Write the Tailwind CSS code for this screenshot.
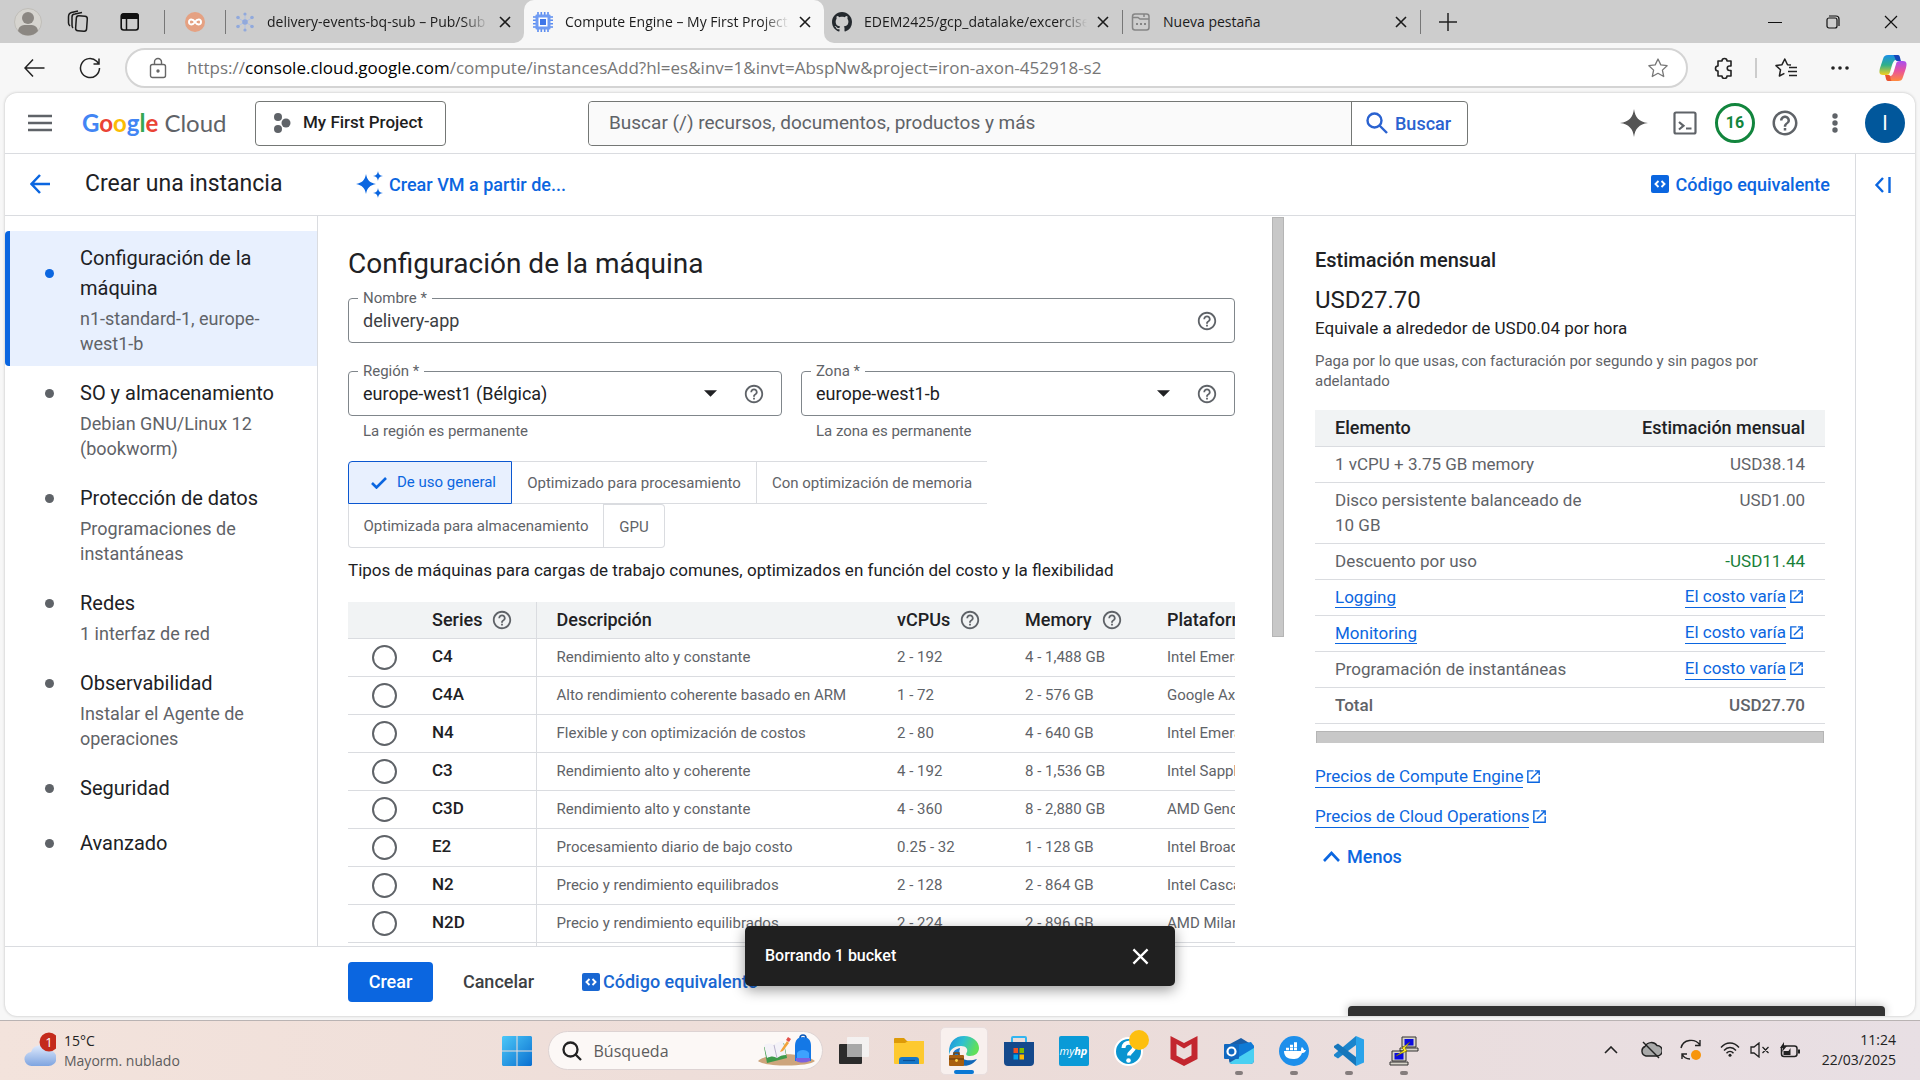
<!DOCTYPE html>
<html lang="es">
<head>
<meta charset="utf-8">
<title>Compute Engine – My First Project</title>
<script src="https://cdn.jsdelivr.net/npm/@tailwindcss/browser@4"></script>
</head>
<body class="flex h-screen flex-col overflow-hidden bg-[#f7f7f7] font-['Roboto',sans-serif] text-[#202124]">

<svg class="hidden" aria-hidden="true">
  <symbol id="help" viewBox="0 0 24 24"><path fill="currentColor" d="M11 18h2v-2h-2v2zm1-16C6.48 2 2 6.48 2 12s4.48 10 10 10 10-4.48 10-10S17.52 2 12 2zm0 18c-4.41 0-8-3.59-8-8s3.59-8 8-8 8 3.59 8 8-3.59 8-8 8zm0-14c-2.21 0-4 1.79-4 4h2c0-1.1.9-2 2-2s2 .9 2 2c0 2-3 1.75-3 5h2c0-2.25 3-2.5 3-5 0-2.21-1.79-4-4-4z"/></symbol>
  <symbol id="ext" viewBox="0 0 24 24"><path fill="currentColor" d="M19 19H5V5h7V3H3v18h18v-9h-2v7zM14 3v2h3.59l-9.83 9.83 1.41 1.41L19 6.41V10h2V3h-7z"/></symbol>
  <symbol id="close" viewBox="0 0 12 12"><path d="M1 1l10 10M11 1L1 11" fill="none" stroke="currentColor" stroke-width="1.6"/></symbol>
  <symbol id="code" viewBox="0 0 18 18"><rect width="18" height="18" rx="2" fill="currentColor"/><path d="M7.5 6L4.5 9l3 3M10.500 6l3 3-3 3" fill="none" stroke="#fff" stroke-width="1.9"/></symbol>
  <symbol id="caret" viewBox="0 0 12 6"><path d="M0 0h12L6 6z" fill="currentColor"/></symbol>
</svg>

<!-- Browser tabs -->
<header class="flex h-[43px] shrink-0 font-['Open_Sans',sans-serif] text-[14px] text-[#1b1b1b]">
  <div class="flex items-center rounded-br-[10px] bg-[#cdcdcd] pl-[14px]">
    <button aria-label="Perfil" class="mr-6"><svg width="28" height="28" viewBox="0 0 28 28"><circle cx="14" cy="14" r="13.500" fill="#d6d4cf" stroke="#bfbdb8"/><circle cx="14" cy="10" r="6" fill="#8b8782"/><path d="M4 23c1-6 5-6 10-6s9 0 10 6c-5 6-15 6-20 0z" fill="#8b8782"/></svg></button>
    <button aria-label="Espacios de trabajo" class="mr-[30px]"><svg width="24" height="24" viewBox="0 0 24 24" fill="none" stroke="#1b1b1b" stroke-width="1.500"><rect x="10" y="6" width="11" height="15" rx="2.500" transform="rotate(4 15 13)"/><path d="M7 18c-1-1-1-2-1-3V7c0-2 1-3 3-3l7-1.500M4 16c-1-1-1.500-2-1.500-3V7c0-3 1-4 3-4.500L12 1"/></svg></button>
    <button aria-label="Pestañas" class="mr-[24px]"><svg width="20" height="20" viewBox="0 0 20 20"><rect x="1.200" y="2" width="17" height="16" rx="2.500" fill="none" stroke="#111" stroke-width="1.600"/><path d="M1 7V4a3 3 0 013-3h12a3 3 0 013 3v3z" fill="#111"/><path d="M6.500 6v12" stroke="#111" stroke-width="1.500"/></svg></button>
    <span class="h-6 w-px bg-[#777]"></span>
    <svg class="mx-5" width="20" height="20" viewBox="0 0 20 20"><circle cx="10" cy="10" r="10" fill="#e5a182"/><path d="M10 10c-2-3-6-3.500-6 0s4 3 6 0 6-3.500 6 0-4 3-6 0z" fill="none" stroke="#fff" stroke-width="2"/></svg>
    <span class="h-6 w-px bg-[#777]"></span>
    <div class="flex w-[298px] items-center pl-[9px]">
      <svg width="20" height="20" viewBox="0 0 20 20" fill="#91a9dc"><path d="M10 10V2M10 10v8M10 10l7-4M10 10L3 6M10 10l7 4M10 10l-7 4" stroke="#afc0e6"/><circle cx="10" cy="10" r="2.800"/><circle cx="10" cy="2" r="1.600"/><circle cx="10" cy="18" r="1.600"/><circle cx="17" cy="5.500" r="1.800"/><circle cx="3" cy="5.500" r="1.800"/><circle cx="17" cy="14.500" r="1.800"/><circle cx="3" cy="14.500" r="1.800"/></svg>
      <span class="ml-3 flex-1 overflow-hidden whitespace-nowrap [mask-image:linear-gradient(to_right,#000_88%,transparent)]">delivery-events-bq-sub – Pub/Sub</span>
      <button aria-label="Cerrar" class="mr-[13px] ml-[10px]"><svg width="12" height="12"><use href="#close"/></svg></button>
    </div>
  </div>
  <div class="bg-[#cdcdcd]">
    <div class="flex h-full w-[300px] items-center rounded-t-[10px] bg-[#f7f7f7] pl-[9px]">
      <svg width="20" height="20" viewBox="0 0 20 20"><path d="M5 0v20M8.300 0v20M11.700 0v20M15 0v20M0 5h20M0 8.300h20M0 11.700h20M0 15h20" stroke="#5b8cf0" stroke-width="1.600"/><rect x="2.500" y="2.500" width="15" height="15" rx="1" fill="#6f9bf3"/><rect x="5.500" y="5.500" width="9" height="9" fill="#fff"/><rect x="7" y="7" width="6" height="6" fill="#3f76e8"/></svg>
      <span class="ml-3 flex-1 overflow-hidden whitespace-nowrap [mask-image:linear-gradient(to_right,#000_88%,transparent)]">Compute Engine – My First Project</span>
      <button aria-label="Cerrar" class="mr-[13px] ml-[10px]"><svg width="12" height="12"><use href="#close"/></svg></button>
    </div>
  </div>
  <div class="flex flex-1 items-center rounded-bl-[10px] bg-[#cdcdcd]">
    <div class="flex w-[298px] items-center pl-[8px]">
      <svg width="20" height="20" viewBox="0 0 16 16"><path fill="#24292e" d="M8 0C3.580 0 0 3.580 0 8c0 3.540 2.290 6.530 5.470 7.590.4.070.55-.17.55-.38 0-.19-.01-.82-.01-1.490-2.010.37-2.530-.49-2.690-.94-.09-.23-.48-.94-.82-1.130-.28-.15-.68-.52-.01-.53.63-.01 1.080.58 1.230.82.72 1.210 1.870.87 2.330.66.070-.52.28-.87.51-1.070-1.780-.2-3.640-.89-3.640-3.950 0-.87.31-1.590.82-2.150-.08-.2-.36-1.020.08-2.120 0 0 .67-.21 2.200.82.64-.18 1.320-.27 2-.27.68 0 1.360.09 2 .27 1.530-1.040 2.200-.82 2.200-.82.44 1.100.16 1.920.08 2.120.51.56.82 1.270.82 2.150 0 3.070-1.870 3.750-3.650 3.950.29.25.54.73.54 1.480 0 1.070-.01 1.930-.01 2.200 0 .21.15.46.55.38A8.010 8.010 0 0016 8c0-4.420-3.580-8-8-8z"/></svg>
      <span class="ml-3 flex-1 overflow-hidden whitespace-nowrap [mask-image:linear-gradient(to_right,#000_88%,transparent)]">EDEM2425/gcp_datalake/excercises</span>
      <button aria-label="Cerrar" class="mr-[13px] ml-[10px]"><svg width="12" height="12"><use href="#close"/></svg></button>
    </div>
    <span class="h-6 w-px bg-[#777]"></span>
    <div class="flex w-[297px] items-center pl-[8px]">
      <svg width="20" height="20" viewBox="0 0 20 20" fill="none" stroke="#858585" stroke-width="1.500"><rect x="1.500" y="2" width="16.500" height="16" rx="2.500"/><path d="M2 5.500h5l2 1.500h9M13 2v3"/><path d="M5 12h2M9 12h2M13 12h2" stroke-width="2"/></svg>
      <span class="ml-3 flex-1">Nueva pestaña</span>
      <button aria-label="Cerrar" class="mr-[13px]"><svg width="12" height="12"><use href="#close"/></svg></button>
    </div>
    <span class="h-6 w-px bg-[#777]"></span>
    <button aria-label="Nueva pestaña" class="ml-[18px]"><svg width="18" height="18" viewBox="0 0 18 18"><path d="M9 0v18M0 9h18" stroke="#222" stroke-width="1.500"/></svg></button>
    <div class="ml-auto flex items-center gap-11 pr-[22px]">
      <button aria-label="Minimizar"><svg width="14" height="14"><path d="M0 7.500h14" stroke="#111"/></svg></button>
      <button aria-label="Restaurar"><svg width="14" height="14" fill="none" stroke="#111" stroke-width="1.200"><rect x="1" y="3" width="10" height="10" rx="2"/><path d="M3 1h7a3 3 0 013 3v7"/></svg></button>
      <button aria-label="Cerrar ventana"><svg width="14" height="14"><path d="M1 1l12 12M13 1L1 13" stroke="#111" stroke-width="1.200"/></svg></button>
    </div>
  </div>
</header>

<!-- Address bar -->
<div class="flex h-[50px] shrink-0 items-center pr-[13px] pl-[24px] text-[#222]">
  <button aria-label="Atrás" class="mr-[34px]"><svg width="21" height="20" viewBox="0 0 21 20" fill="none" stroke="currentColor" stroke-width="1.500"><path d="M9 1.500L1 10l8 8.500M1 10h19.500"/></svg></button>
  <button aria-label="Actualizar" class="mr-[24px]"><svg width="22" height="22" viewBox="0 0 22 22" fill="none" stroke="currentColor" stroke-width="1.500"><path d="M20.500 11a9.500 9.500 0 11-2.800-6.700L20 7M20 1.500V7h-5.500"/></svg></button>
  <div class="flex h-10 flex-1 items-center rounded-full border-2 border-[#d4d4d4] bg-white pr-[18px] pl-[22px]">
    <svg width="18" height="22" viewBox="0 0 18 22" fill="none" stroke="#666" stroke-width="1.400"><rect x="1.500" y="7.500" width="15" height="13" rx="2"/><path d="M5.500 7.500V5a3.500 3.500 0 017 0v2.500"/><circle cx="9" cy="14" r="1" fill="#444"/></svg>
    <p class="ml-5 flex-1 font-['Open_Sans',sans-serif] text-[17px] whitespace-nowrap text-[#767676]">https://<span class="text-black">console.cloud.google.com</span>/compute/instancesAdd?hl=es&amp;inv=1&amp;invt=AbspNw&amp;project=iron-axon-452918-s2</p>
    <button aria-label="Favorito"><svg width="20" height="20" viewBox="0 0 20 20" fill="none" stroke="#777" stroke-width="1.300" stroke-linejoin="round"><path d="M10 1l2.800 5.900 6.300.8-4.700 4.400 1.300 6.400-5.700-3.200-5.700 3.200 1.300-6.400L.9 7.700l6.300-.8z"/></svg></button>
  </div>
  <button aria-label="Extensiones" class="mr-[20px] ml-[25px]"><svg width="22" height="22" viewBox="0 0 22 22" fill="none" stroke="currentColor" stroke-width="1.600" stroke-linejoin="round"><path d="M5 4h4a2.500 2.500 0 015 0h4v5h-1.500a2.200 2.200 0 000 4.500H18V19h-4a2.500 2.500 0 01-5 0H5v-5a2.500 2.500 0 010-5z"/></svg></button>
  <span class="h-5 w-[2px] bg-[#ccc]"></span>
  <button aria-label="Favoritos" class="mr-[34px] ml-[18px]"><svg width="22" height="20" viewBox="0 0 22 20" fill="none" stroke="currentColor" stroke-width="1.500" stroke-linejoin="round"><path d="M16 7l-3.500-.3L9.800 1 7 6.700 1 7.600l4.500 4.200L4.400 18l5-2.600M14 9.500h8M13 13.500h9M14 17.500h8"/></svg></button>
  <button aria-label="Más" class="mr-[30px]"><svg width="18" height="4" fill="#222"><circle cx="2" cy="2" r="1.800"/><circle cx="9" cy="2" r="1.800"/><circle cx="16" cy="2" r="1.800"/></svg></button>
  <button aria-label="Copilot"><svg width="28" height="28" viewBox="0 0 28 28"><defs><linearGradient id="cpa" x1="0" y1="0" x2="0" y2="1"><stop offset="0" stop-color="#1a8fe8"/><stop offset=".5" stop-color="#2fb08a"/><stop offset="1" stop-color="#f5cf1c"/></linearGradient><linearGradient id="cpb" x1="0" y1="0" x2="0" y2="1"><stop offset="0" stop-color="#a84ff0"/><stop offset=".5" stop-color="#e9549c"/><stop offset="1" stop-color="#ff8a3c"/></linearGradient></defs><path d="M9 1h9c2 0 2 2 3 5h-4c-2 0-3 2-4 5l-2 7c-1 3-2 3-5 3H4c-4 0-4-3-3-7L4 5c1-3 2-4 5-4z" fill="url(#cpa)"/><path d="M14 1h5c2 0 2 3 3 6h-4c-2 0-2-6-4-6z" fill="#1546b8"/><path d="M19 27h-9c-2 0-2-2-3-5h4c2 0 3-2 4-5l2-7c1-3 2-3 5-3h2c4 0 4 3 3 7l-3 9c-1 3-2 4-5 4z" fill="url(#cpb)"/><path d="M13 27H9c-2 0-2-3-3-6h4c2 0 1 6 3 6z" fill="#e8522e"/><path d="M12 18l3-9h2l-3 9z" fill="#fff"/></svg></button>
</div>

<!-- Console page -->
<div class="relative mx-[5px] mb-1 flex min-h-0 flex-1 flex-col overflow-hidden rounded-[12px] bg-white shadow-[0_0_3px_#bbb]">
  <div class="flex h-[61px] shrink-0 items-center border-b border-[#dadce0] pr-[10px] pl-[23px]">
    <button aria-label="Menú"><svg width="24" height="20" viewBox="0 0 24 20"><path d="M0 3h24M0 10h24M0 17h24" stroke="#5f6368" stroke-width="2.600"/></svg></button>
    <a href="#" class="ml-[30px] w-[145px] font-['Lato',sans-serif] text-[24px] whitespace-nowrap"><span class="font-bold"><span class="text-[#4285f4]">G</span><span class="text-[#ea4335]">o</span><span class="text-[#fbbc04]">o</span><span class="text-[#4285f4]">g</span><span class="text-[#34a853]">l</span><span class="text-[#ea4335]">e</span></span> <span class="text-[#5f6368]">Cloud</span></a>
    <button class="ml-7 flex h-[45px] w-[191px] items-center rounded-[4px] border border-[#747775] pl-[17px] text-[17px] font-medium text-[#1f1f1f]"><svg class="mr-[12px]" width="18" height="20" viewBox="0 0 18 20" fill="#5f6368"><circle cx="5" cy="4" r="4"/><circle cx="13" cy="10" r="4.500"/><circle cx="5" cy="16" r="4"/></svg>My First Project</button>
    <form class="ml-[142px] flex h-[45px] w-[880px] rounded-[4px] border border-[#747775]">
      <input aria-label="Buscar recursos" placeholder="Buscar (/) recursos, documentos, productos y más" class="flex-1 rounded-l-[4px] bg-[#fafafa] px-5 text-[19px] placeholder:text-[#5f6368]">
      <button type="button" class="flex w-[116px] items-center border-l border-[#747775] pl-[14px] text-[18px] font-medium text-[#2a62d0]"><svg class="mr-[7px]" width="22" height="22" viewBox="0 0 22 22" fill="none" stroke="currentColor" stroke-width="2.400"><circle cx="8.500" cy="8.500" r="7"/><path d="M13.500 13.500l7.500 7.500"/></svg>Buscar</button>
    </form>
    <div class="ml-auto flex items-center">
      <button aria-label="Gemini"><svg width="28" height="28" viewBox="0 0 28 28"><path d="M14 0c1 8 5 13 14 14-9 1-13 6-14 14-1-8-5-13-14-14C9 13 13 8 14 0z" fill="#555"/></svg></button>
      <button aria-label="Cloud Shell" class="mr-[18px] ml-[25px]"><svg width="24" height="24" viewBox="0 0 24 24" fill="none" stroke="#5f6368" stroke-width="2.200"><rect x="1.500" y="1.500" width="21" height="21" rx="1.500"/><path d="M6 11l4.500 3.800L6 18.500M13 17.500h5.500"/></svg></button>
      <button class="size-10 rounded-full border-[3px] border-[#12853d] text-[16px] font-bold text-[#12853d]">16</button>
      <button aria-label="Ayuda" class="ml-[15px] text-[#5f6368]"><svg width="30" height="30"><use href="#help"/></svg></button>
      <button aria-label="Más opciones" class="mr-[27px] ml-[32px]"><svg width="6" height="20" fill="#5f6368"><circle cx="3" cy="3" r="2.700"/><circle cx="3" cy="10" r="2.700"/><circle cx="3" cy="17" r="2.700"/></svg></button>
      <button class="size-10 rounded-full bg-[#01579b] text-[20px] text-white">I</button>
    </div>
  </div>

  <div class="flex min-h-0 flex-1">
    <div class="flex min-w-0 flex-1 flex-col">
      <div class="flex h-[62px] shrink-0 items-center border-b border-[#dadce0] pr-[25px] pb-px pl-[25px] text-[18px] font-medium text-[#0b66e0]">
        <button aria-label="Volver"><svg width="20" height="20" viewBox="0 0 20 20" fill="none" stroke="currentColor" stroke-width="2.500"><path d="M10 1L1.500 10 10 19M1.500 10H20"/></svg></button>
        <h1 class="ml-[35px] w-[271px] text-[23px] font-normal text-[#202124]">Crear una instancia</h1>
        <button class="flex items-center"><svg class="mr-[6px]" width="27" height="27" viewBox="0 0 27 27" fill="currentColor"><path d="M10 3c1 6 4 9 10 10-6 1-9 4-10 10-1-6-4-9-10-10C6 12 9 9 10 3zM22 0c.5 3 1.500 4.500 5 5-3.500.5-4.500 2-5 5-.5-3-1.500-4.500-5-5 3.500-.5 4.500-2 5-5zM22 17c.5 3 1.500 4.500 5 5-3.500.5-4.500 2-5 5-.5-3-1.500-4.500-5-5 3.500-.5 4.500-2 5-5z"/></svg>Crear VM a partir de...</button>
        <button class="ml-auto flex items-center"><svg class="mr-[7px]" width="18" height="18"><use href="#code"/></svg>Código equivalente</button>
      </div>

      <div class="flex min-h-0 flex-1">
        <!-- Section navigation -->
        <nav class="w-[313px] shrink-0 border-r border-[#dadce0] pt-[15px] text-[20px] leading-[30px]">
          <a href="#" class="flex min-h-[55px] rounded-l-[4px] border-l-[5px] border-[#0b66e0] bg-[#e8f0fe] pt-3 pr-[40px] pb-[10px] pl-[35px]">
            <span class="mt-[26px] size-[9px] shrink-0 rounded-full bg-[#0b66e0]"></span>
            <span class="ml-[26px]">Configuración de la máquina<small class="mt-[3px] block text-[18px] leading-[25px] text-[#5f6368]">n1-standard-1, europe-west1-b</small></span>
          </a>
          <a href="#" class="flex min-h-[55px] pt-3 pr-[40px] pb-[10px] pl-10">
            <span class="mt-[11px] size-[9px] shrink-0 rounded-full bg-[#5f6368]"></span>
            <span class="ml-[26px]">SO y almacenamiento<small class="mt-[3px] block text-[18px] leading-[25px] text-[#5f6368]">Debian GNU/Linux 12 (bookworm)</small></span>
          </a>
          <a href="#" class="flex min-h-[55px] pt-3 pr-[40px] pb-[10px] pl-10">
            <span class="mt-[11px] size-[9px] shrink-0 rounded-full bg-[#5f6368]"></span>
            <span class="ml-[26px]">Protección de datos<small class="mt-[3px] block text-[18px] leading-[25px] text-[#5f6368]">Programaciones de instantáneas</small></span>
          </a>
          <a href="#" class="flex min-h-[55px] pt-3 pr-[40px] pb-[10px] pl-10">
            <span class="mt-[11px] size-[9px] shrink-0 rounded-full bg-[#5f6368]"></span>
            <span class="ml-[26px]">Redes<small class="mt-[3px] block text-[18px] leading-[25px] text-[#5f6368]">1 interfaz de red</small></span>
          </a>
          <a href="#" class="flex min-h-[55px] pt-3 pr-[40px] pb-[10px] pl-10">
            <span class="mt-[11px] size-[9px] shrink-0 rounded-full bg-[#5f6368]"></span>
            <span class="ml-[26px]">Observabilidad<small class="mt-[3px] block text-[18px] leading-[25px] text-[#5f6368]">Instalar el Agente de operaciones</small></span>
          </a>
          <a href="#" class="flex min-h-[55px] pt-3 pl-10">
            <span class="mt-[11px] size-[9px] shrink-0 rounded-full bg-[#5f6368]"></span>
            <span class="ml-[26px]">Seguridad</span>
          </a>
          <a href="#" class="flex min-h-[55px] pt-3 pl-10">
            <span class="mt-[11px] size-[9px] shrink-0 rounded-full bg-[#5f6368]"></span>
            <span class="ml-[26px]">Avanzado</span>
          </a>
        </nav>

        <!-- Machine configuration -->
        <main class="flex min-w-0 flex-1 overflow-hidden">
          <div class="min-w-0 flex-1 overflow-hidden pt-[30px] pr-[37px] pl-[30px]">
            <h2 class="text-[28px] leading-9">Configuración de la máquina</h2>
            <div class="relative mt-4 flex h-[45px] items-center rounded-[4px] border border-[#80868b] pr-[16px]">
              <label for="name" class="absolute -top-[11px] left-[9px] bg-white px-[5px] text-[15px] leading-5 text-[#5f6368]">Nombre *</label>
              <input id="name" value="delivery-app" class="h-full flex-1 px-[14px] text-[18px] text-[#3c4043]">
              <svg class="text-[#5f6368]" width="22" height="22"><use href="#help"/></svg>
            </div>
            <div class="mt-7 grid grid-cols-2 gap-[19px]">
              <div>
                <div class="relative flex h-[45px] items-center rounded-[4px] border border-[#80868b] pr-[16px]">
                  <label for="region" class="absolute -top-[11px] left-[9px] bg-white px-[5px] text-[15px] leading-5 text-[#5f6368]">Región *</label>
                  <select id="region" class="h-full flex-1 appearance-none px-[14px] text-[18px]"><option>europe-west1 (Bélgica)</option></select>
                  <svg width="13" height="7"><use href="#caret"/></svg>
                  <svg class="ml-[26px] text-[#5f6368]" width="22" height="22"><use href="#help"/></svg>
                </div>
                <p class="mt-[5px] pl-[15px] text-[15px] leading-5 text-[#5f6368]">La región es permanente</p>
              </div>
              <div>
                <div class="relative flex h-[45px] items-center rounded-[4px] border border-[#80868b] pr-[16px]">
                  <label for="zone" class="absolute -top-[11px] left-[9px] bg-white px-[5px] text-[15px] leading-5 text-[#5f6368]">Zona *</label>
                  <select id="zone" class="h-full flex-1 appearance-none px-[14px] text-[18px]"><option>europe-west1-b</option></select>
                  <svg width="13" height="7"><use href="#caret"/></svg>
                  <svg class="ml-[26px] text-[#5f6368]" width="22" height="22"><use href="#help"/></svg>
                </div>
                <p class="mt-[5px] pl-[15px] text-[15px] leading-5 text-[#5f6368]">La zona es permanente</p>
              </div>
            </div>
            <div class="mt-[20px] text-[15px] text-[#5f6368]">
              <div class="flex h-[43px]">
                <button class="flex w-[164px] items-center rounded-tl-[4px] border border-[#0b57d0] bg-[#e8f0fe] pl-[22px] text-[#0b66e0]"><svg class="mr-[10px]" width="16" height="12" viewBox="0 0 16 12" fill="none" stroke="currentColor" stroke-width="2.600"><path d="M1 6l4.500 4.500L15 1"/></svg>De uso general</button>
                <button class="w-[245px] border-y border-r border-[#dadce0] pt-[2px]">Optimizado para procesamiento</button>
                <button class="w-[230px] border-y border-[#dadce0] pt-[2px]">Con optimización de memoria</button>
              </div>
              <div class="flex h-[44px]">
                <button class="w-[256px] rounded-bl-[4px] border border-t-0 border-[#dadce0] pt-[2px]">Optimizada para almacenamiento</button>
                <button class="w-[61px] rounded-r-[4px] border-y border-r border-[#dadce0] pt-[2px]">GPU</button>
              </div>
            </div>
            <p class="mt-[10px] text-[17px] leading-6">Tipos de máquinas para cargas de trabajo comunes, optimizados en función del costo y la flexibilidad</p>
            <div class="mt-5 overflow-hidden">
              <table class="w-[1009px] table-fixed text-left text-[15px] text-[#5f6368]">
                <colgroup><col class="w-[64px]"><col class="w-[124px]"><col class="w-[341px]"><col class="w-[128px]"><col class="w-[142px]"><col></colgroup>
                <thead class="bg-[#f1f3f4] text-[18px] text-[#202124]">
                  <tr class="h-9 border-b border-[#dadce0]">
                    <th></th>
                    <th class="border-r border-[#dadce0] pl-5 font-medium"><span class="flex items-center gap-[9px]">Series<svg class="text-[#5f6368]" width="22" height="22"><use href="#help"/></svg></span></th>
                    <th class="pl-5 font-medium">Descripción</th>
                    <th class="pl-5 font-medium"><span class="flex items-center gap-[9px]">vCPUs<svg class="text-[#5f6368]" width="22" height="22"><use href="#help"/></svg></span></th>
                    <th class="pl-5 font-medium"><span class="flex items-center gap-[9px]">Memory<svg class="text-[#5f6368]" width="22" height="22"><use href="#help"/></svg></span></th>
                    <th class="pl-5 font-medium">Plataforma de CPU</th>
                  </tr>
                </thead>
                <tbody>
                  <tr class="h-[38px] border-b border-[#dadce0]"><td class="pl-[24px]"><input id="c4" type="radio" name="series" class="block size-[25px] appearance-none rounded-full border-2 border-[#5f6368]"></td><td class="border-r border-[#dadce0] pl-5"><label for="c4" class="text-[17px] font-medium text-[#202124]">C4</label></td><td class="pl-5">Rendimiento alto y constante</td><td class="pl-5">2 - 192</td><td class="pl-5">4 - 1,488 GB</td><td class="pl-5">Intel Emerald Rapids</td></tr>
                  <tr class="h-[38px] border-b border-[#dadce0]"><td class="pl-[24px]"><input id="c4a" type="radio" name="series" class="block size-[25px] appearance-none rounded-full border-2 border-[#5f6368]"></td><td class="border-r border-[#dadce0] pl-5"><label for="c4a" class="text-[17px] font-medium text-[#202124]">C4A</label></td><td class="pl-5">Alto rendimiento coherente basado en ARM</td><td class="pl-5">1 - 72</td><td class="pl-5">2 - 576 GB</td><td class="pl-5">Google Axion</td></tr>
                  <tr class="h-[38px] border-b border-[#dadce0]"><td class="pl-[24px]"><input id="n4" type="radio" name="series" class="block size-[25px] appearance-none rounded-full border-2 border-[#5f6368]"></td><td class="border-r border-[#dadce0] pl-5"><label for="n4" class="text-[17px] font-medium text-[#202124]">N4</label></td><td class="pl-5">Flexible y con optimización de costos</td><td class="pl-5">2 - 80</td><td class="pl-5">4 - 640 GB</td><td class="pl-5">Intel Emerald Rapids</td></tr>
                  <tr class="h-[38px] border-b border-[#dadce0]"><td class="pl-[24px]"><input id="c3" type="radio" name="series" class="block size-[25px] appearance-none rounded-full border-2 border-[#5f6368]"></td><td class="border-r border-[#dadce0] pl-5"><label for="c3" class="text-[17px] font-medium text-[#202124]">C3</label></td><td class="pl-5">Rendimiento alto y coherente</td><td class="pl-5">4 - 192</td><td class="pl-5">8 - 1,536 GB</td><td class="pl-5">Intel Sapphire Rapids</td></tr>
                  <tr class="h-[38px] border-b border-[#dadce0]"><td class="pl-[24px]"><input id="c3d" type="radio" name="series" class="block size-[25px] appearance-none rounded-full border-2 border-[#5f6368]"></td><td class="border-r border-[#dadce0] pl-5"><label for="c3d" class="text-[17px] font-medium text-[#202124]">C3D</label></td><td class="pl-5">Rendimiento alto y constante</td><td class="pl-5">4 - 360</td><td class="pl-5">8 - 2,880 GB</td><td class="pl-5">AMD Genoa</td></tr>
                  <tr class="h-[38px] border-b border-[#dadce0]"><td class="pl-[24px]"><input id="e2" type="radio" name="series" class="block size-[25px] appearance-none rounded-full border-2 border-[#5f6368]"></td><td class="border-r border-[#dadce0] pl-5"><label for="e2" class="text-[17px] font-medium text-[#202124]">E2</label></td><td class="pl-5">Procesamiento diario de bajo costo</td><td class="pl-5">0.25 - 32</td><td class="pl-5">1 - 128 GB</td><td class="pl-5">Intel Broadwell</td></tr>
                  <tr class="h-[38px] border-b border-[#dadce0]"><td class="pl-[24px]"><input id="n2" type="radio" name="series" class="block size-[25px] appearance-none rounded-full border-2 border-[#5f6368]"></td><td class="border-r border-[#dadce0] pl-5"><label for="n2" class="text-[17px] font-medium text-[#202124]">N2</label></td><td class="pl-5">Precio y rendimiento equilibrados</td><td class="pl-5">2 - 128</td><td class="pl-5">2 - 864 GB</td><td class="pl-5">Intel Cascade Lake</td></tr>
                  <tr class="h-[38px] border-b border-[#dadce0]"><td class="pl-[24px]"><input id="n2d" type="radio" name="series" class="block size-[25px] appearance-none rounded-full border-2 border-[#5f6368]"></td><td class="border-r border-[#dadce0] pl-5"><label for="n2d" class="text-[17px] font-medium text-[#202124]">N2D</label></td><td class="pl-5">Precio y rendimiento equilibrados</td><td class="pl-5">2 - 224</td><td class="pl-5">2 - 896 GB</td><td class="pl-5">AMD Milan</td></tr>
                  <tr class="h-[38px]"><td></td><td class="border-r border-[#dadce0]"></td><td></td><td></td><td></td><td></td></tr>
                </tbody>
              </table>
            </div>
          </div>
          <div class="mt-px h-[420px] w-3 shrink-0 border border-[#b5b5b5] bg-[#c8c8c8]"></div>
        </main>

        <!-- Monthly estimate -->
        <aside class="w-[571px] shrink-0 pt-[30px] pr-[30px] pl-[31px] text-[17px]">
          <h2 class="text-[20px] leading-[28px] font-medium">Estimación mensual</h2>
          <p class="mt-3 text-[24px] leading-[28px]">USD27.70</p>
          <p class="leading-[28px]">Equivale a alrededor de USD0.04 por hora</p>
          <p class="mt-[9px] text-[15px] leading-5 text-[#5f6368]">Paga por lo que usas, con facturación por segundo y sin pagos por adelantado</p>
          <table class="mt-[19px] w-full leading-[25px] text-[#5f6368]">
            <thead class="bg-[#f1f3f4] text-[18px] text-[#202124]"><tr class="h-9 border-b border-[#dadce0]"><th class="w-[300px] pl-5 text-left font-medium">Elemento</th><th class="pr-5 text-right font-medium">Estimación mensual</th></tr></thead>
            <tbody class="align-top">
              <tr class="border-b border-[#dadce0]"><td class="py-[5px] pl-5">1 vCPU + 3.75 GB memory</td><td class="py-[5px] pr-5 text-right">USD38.14</td></tr>
              <tr class="border-b border-[#dadce0]"><td class="py-[5px] pr-5 pl-5">Disco persistente balanceado de 10&nbsp;GB</td><td class="py-[5px] pr-5 text-right">USD1.00</td></tr>
              <tr class="border-b border-[#dadce0]"><td class="py-[5px] pl-5">Descuento por uso</td><td class="py-[5px] pr-5 text-right text-[#188038]">-USD11.44</td></tr>
              <tr class="border-b border-[#dadce0] text-[#0b66e0]"><td class="py-[5px] pl-5"><a href="#" class="border-b border-current">Logging</a></td><td class="py-[5px] pr-5"><a href="#" class="flex items-center justify-end gap-[2px]"><span class="border-b border-current leading-[22px]">El costo varía</span><svg width="17" height="17"><use href="#ext"/></svg></a></td></tr>
              <tr class="border-b border-[#dadce0] text-[#0b66e0]"><td class="py-[5px] pl-5"><a href="#" class="border-b border-current">Monitoring</a></td><td class="py-[5px] pr-5"><a href="#" class="flex items-center justify-end gap-[2px]"><span class="border-b border-current leading-[22px]">El costo varía</span><svg width="17" height="17"><use href="#ext"/></svg></a></td></tr>
              <tr class="border-b border-[#dadce0]"><td class="py-[5px] pl-5">Programación de instantáneas</td><td class="py-[5px] pr-5 text-[#0b66e0]"><a href="#" class="flex items-center justify-end gap-[2px]"><span class="border-b border-current leading-[22px]">El costo varía</span><svg width="17" height="17"><use href="#ext"/></svg></a></td></tr>
              <tr class="border-b border-[#dadce0] font-medium"><td class="py-[5px] pl-5">Total</td><td class="py-[5px] pr-5 text-right">USD27.70</td></tr>
            </tbody>
          </table>
          <div class="mx-px mt-[7px] h-3 border border-b-0 border-[#b5b5b5] bg-[#c8c8c8]"></div>
          <div class="mt-[22px] flex flex-col items-start gap-[17px] text-[#0b66e0]">
            <a href="#" class="flex items-center gap-[2px]"><span class="border-b border-current leading-[22px]">Precios de Compute Engine</span><svg width="17" height="17"><use href="#ext"/></svg></a>
            <a href="#" class="flex items-center gap-[2px]"><span class="border-b border-current leading-[22px]">Precios de Cloud Operations</span><svg width="17" height="17"><use href="#ext"/></svg></a>
            <button class="flex items-center pl-2 text-[18px] leading-[23px] font-medium"><svg class="mr-[7px]" width="17" height="11" viewBox="0 0 17 11" fill="none" stroke="currentColor" stroke-width="2.600"><path d="M1 10l7.500-8L16 10"/></svg>Menos</button>
          </div>
        </aside>
      </div>

      <footer class="flex h-[70px] shrink-0 items-center border-t border-[#dadce0] pl-[343px] text-[18px] font-medium">
        <button class="h-10 w-[85px] rounded-[4px] bg-[#0b66e0] text-white">Crear</button>
        <button class="ml-[29px] w-[73px] text-[#3c4043]">Cancelar</button>
        <button class="ml-[47px] flex items-center text-[#1967d2]"><svg class="mr-[3px]" width="18" height="18"><use href="#code"/></svg>Código equivalente</button>
      </footer>
    </div>
    <div class="w-[60px] shrink-0 border-l border-[#dadce0] pt-[22px] pl-[18px] text-[#0b66e0]">
      <button aria-label="Mostrar panel"><svg width="18" height="16" viewBox="0 0 18 16" fill="none" stroke="currentColor" stroke-width="2.400"><path d="M9 1L2.500 8 9 15M15.500 0v16"/></svg></button>
    </div>
  </div>

  <!-- Notifications over the page -->
  <div role="status" class="absolute bottom-[30px] left-1/2 flex h-[60px] w-[430px] -translate-x-1/2 items-center justify-between rounded-[5px] bg-[#202020] pr-[26px] pl-5 text-[16px] font-medium text-white shadow-[0_4px_14px_rgba(0,0,0,0.4)]">Borrando 1 bucket<button aria-label="Cerrar aviso"><svg width="17" height="17"><use href="#close"/></svg></button></div>
  <div class="absolute right-[30px] bottom-0 h-[10px] w-[537px] rounded-t-[4px] bg-[#323232] shadow-[0_0_10px_rgba(0,0,0,0.3)]"></div>
</div>

<!-- Windows taskbar -->
<div class="grid h-[60px] shrink-0 grid-cols-[1fr_auto_1fr] items-center border-t border-[#b9b3b3] bg-linear-to-r from-[#f3e3dc] via-[#ecdcd8] to-[#e8dfe4] font-['Open_Sans',sans-serif] text-[14px] text-[#222]">
  <div class="flex items-center gap-2 pl-[24px]">
    <svg width="32" height="38" viewBox="0 0 32 38"><defs><linearGradient id="wc" x1="0" y1="0" x2="0" y2="1"><stop offset="0" stop-color="#dfeafc"/><stop offset="1" stop-color="#7ea4e0"/></linearGradient></defs><path d="M8 34a7 7 0 01-1-14 10 10 0 0118-2 8 8 0 01-1 16z" fill="url(#wc)"/><circle cx="25" cy="10" r="9.500" fill="#c42b1c"/><text x="25" y="15" font-size="13" fill="#fff" text-anchor="middle">1</text></svg>
    <div class="leading-5"><p>15°C</p><p class="text-[#5c5c5c]">Mayorm. nublado</p></div>
  </div>

  <div class="flex items-center">
    <button aria-label="Inicio"><svg width="30" height="30" viewBox="0 0 30 30"><defs><linearGradient id="win" x1="0" y1="0" x2="1" y2="1"><stop offset="0" stop-color="#4cc8f8"/><stop offset="1" stop-color="#0a6fd0"/></linearGradient></defs><path d="M1 0h13.500v14.500H0V1zM15.500 0H29l1 1v13.500H15.500zM0 15.500h14.500V30H1l-1-1zM15.500 15.500H30V29l-1 1H15.500z" fill="url(#win)"/></svg></button>
    <label class="ml-4 flex h-[39px] w-[275px] items-center rounded-full border border-[#ddd3d3] bg-[#fcf8f6] pr-[6px] pl-[13px]">
      <svg width="20" height="20" viewBox="0 0 20 20" fill="none" stroke="#222" stroke-width="2.300"><circle cx="8.500" cy="8.500" r="7"/><path d="M13 13l6 6"/></svg>
      <input aria-label="Búsqueda" placeholder="Búsqueda" class="ml-3 w-0 flex-1 text-[16px] placeholder:text-[#5c5c5c]">
      <svg width="58" height="34" viewBox="0 0 58 34"><path d="M0 27c10-9 46-9 57 0-6 6-50 6-57 0z" fill="#cda57c"/><path d="M6 13l20-4 3 15-20 5z" fill="#3d9a4a"/><path d="M6 11c4-2 7-2 10 0 3-3 6-4 9-4l3 14c-4 0-6 1-9 3-3-2-6-2-10 0z" fill="#f4f2f8"/><path d="M16 11l3 13" stroke="#b9b3cc"/><path d="M23 16l6-9 2 2-6 8-3 1z" fill="#f2a33a"/><path d="M28 6l2-3 3 2-2 3z" fill="#e2504a"/><path d="M37 12c0-6 3-9 8-9s8 3 8 9v15H37z" fill="#1478e6"/><path d="M39 19c2-4 10-4 12 0v6H39z" fill="#3da2ff"/><path d="M38 24h14v3c-5 2-10 2-14 0z" fill="#7b61e0"/><path d="M42 4c0-4 6-4 6 0" fill="none" stroke="#0d58b8" stroke-width="1.500"/></svg>
    </label>
    <div class="ml-4 flex items-center gap-[25px]">
      <button aria-label="Vista de tareas"><svg width="30" height="30" viewBox="0 0 30 30"><rect y="8" width="23" height="20" rx="1" fill="#2b2b2b"/><rect x="8" y="1" width="22" height="20" rx="1" fill="#f4f4f4" fill-opacity=".85"/><path d="M8 8h15v13H8z" fill="#a8a8a8"/></svg></button>
      <button aria-label="Explorador"><svg width="30" height="30" viewBox="0 0 30 30"><path d="M0 3q0-1 1-1h9l3 3h16q1 0 1 1v6H0z" fill="#dd9a08"/><path d="M0 7h11l3-2h16v22q0 1-1 1H1q-1 0-1-1z" fill="#fdc92f"/><path d="M5 28v-4q0-3 3-3h14q3 0 3 3v4z" fill="#1577c8"/><path d="M9 24.500h12" stroke="#0b4f94" stroke-width="1.200"/></svg></button>
      <button aria-label="Edge" class="relative -mx-[9px] flex size-12 items-center justify-center rounded-[5px] border border-[#e9dede] bg-[#f8f0ee]"><svg width="30" height="30" viewBox="0 0 30 30"><defs><linearGradient id="eg" x1="0" y1="0" x2="1" y2=".3"><stop offset="0" stop-color="#1b8fe0"/><stop offset=".5" stop-color="#2fc0d0"/><stop offset="1" stop-color="#5fe05a"/></linearGradient></defs><path d="M0 16C0 6 6 0 15 0c9 0 15 6 15 12 0 5-4 8-9 8-3 0-5-1-3-4 1-3-1-6-6-6-6 0-11 3-12 9z" fill="url(#eg)"/><path d="M10 13c-2 8 6 14 18 10-4 6-12 9-20 5z" fill="#1268b8"/><path d="M11 12c-5 1-8 4-7 9l8 2c-2-4-2-7-1-11z" fill="#1a7ad0"/><rect y="19" width="15" height="11" rx="1" fill="#a85f10"/><path d="M0 23h15" stroke="#5f3508" stroke-width="1"/><path d="M5 19v-2h5v2" fill="none" stroke="#7a450b" stroke-width="1.500"/><circle cx="7.500" cy="24.500" r="1.400" fill="#ffd34d"/></svg><span class="absolute bottom-0 h-1 w-5 rounded-full bg-[#0a78d4]"></span></button>
      <button aria-label="Tienda"><svg width="30" height="30" viewBox="0 0 30 30"><path d="M8 6V2q0-1 1-1h12q1 0 1 1v4" fill="none" stroke="#33b5f0" stroke-width="2"/><path d="M0 6h30v20q0 4-4 4H4q-4 0-4-4z" fill="#14498c"/><path d="M9.500 12H14v5H9.500z" fill="#f25022"/><path d="M15.500 12H20v5h-4.500z" fill="#7fba00"/><path d="M9.500 18.500H14v5H9.500z" fill="#00a4ef"/><path d="M15.500 18.500H20v5h-4.500z" fill="#ffb900"/></svg></button>
      <button class="size-[30px] rounded-[2px] bg-[#0a9ad7] text-[11px] leading-[28px] text-white italic">my<b>hp</b></button>
      <button aria-label="Ayuda de HP"><svg class="overflow-visible" width="30" height="30" viewBox="0 0 30 30"><circle cx="14.500" cy="15.500" r="13.500" fill="#0a94d0" stroke="#fff" stroke-width="2"/><path d="M9.500 12c0-7 10.500-7 10.500-.5 0 4-5 4-5 8" fill="none" stroke="#fff" stroke-width="4"/><circle cx="14.500" cy="24.500" r="2.300" fill="#fff"/><circle cx="25" cy="4" r="10" fill="#fdbf0f"/></svg></button>
      <button aria-label="McAfee"><svg width="30" height="30" viewBox="0 0 30 30"><path d="M1.500 0L15 7 28.500 0v23L15 30 1.500 23zM7.500 8v11.500l7.500 4 7.500-4V8L15 12.500z" fill="#c3262e" fill-rule="evenodd"/></svg></button>
      <button aria-label="Outlook" class="relative"><svg width="30" height="30" viewBox="0 0 30 30"><path d="M4 9L17 2l13 8v14q0 4-4 4H9q-4 0-4-4z" fill="#1a5ea8"/><path d="M12 9l15-3 3 4v6L13 27z" fill="#0f7ad6"/><path d="M5 27l25-15v12q0 4-4 4H8z" fill="#4ad0f2"/><rect y="8" width="15" height="15" rx="1" fill="#1068c0"/><circle cx="7.500" cy="15.500" r="4" fill="none" stroke="#fff" stroke-width="2.200"/></svg><span class="absolute -bottom-[9px] left-[11px] h-1 w-2 rounded-full bg-[#857d7d]"></span></button>
      <button aria-label="Docker" class="relative"><svg width="30" height="30" viewBox="0 0 30 30"><circle cx="15" cy="15" r="15" fill="#1d8feb"/><path d="M5 15h17c0-2 0-3 1-4 1 1 2 2 2 3h2c-1 3-3 3-4 3-2 5-5 6-9 6-6 0-9-3-9-8z" fill="#fff"/><path d="M7 13h3M11 13h3M15 13h3M11 10h3M15 10h3M15 7.500h3" stroke="#fff" stroke-width="2.400"/></svg><span class="absolute -bottom-[9px] left-[11px] h-1 w-2 rounded-full bg-[#857d7d]"></span></button>
      <button aria-label="VS Code" class="relative"><svg width="30" height="30" viewBox="0 0 30 30"><path d="M22 0l8 3.500v23L22 30V0z" fill="#2aa3ea"/><path d="M22 0v9L4 22.500 0 20v-1.500z" fill="#1b85cc"/><path d="M22 30v-9L4 7.500 0 10v1.500z" fill="#1576bb"/></svg><span class="absolute -bottom-[9px] left-[11px] h-1 w-2 rounded-full bg-[#857d7d]"></span></button>
      <button aria-label="PuTTY" class="relative"><svg width="30" height="30" viewBox="0 0 30 30"><path d="M13 1h14v10H13zM11 12h18v3H11zM3 15h14v10H3zM1 26h18v3H1z" fill="#d6d2c8" stroke="#333"/><path d="M15.500 3h9v6.500h-9zM5.500 17h9v6.500h-9z" fill="#0a0ae0"/><path d="M21 6l-8 6 2 2-8 6 11-5-2-3z" fill="#ffee20" stroke="#6b6500" stroke-width=".6"/></svg><span class="absolute -bottom-[9px] left-[11px] h-1 w-2 rounded-full bg-[#857d7d]"></span></button>
    </div>
  </div>

  <div class="flex items-center justify-end pr-[24px] pb-[2px]">
    <svg width="14" height="8" viewBox="0 0 14 8" fill="none" stroke="#222" stroke-width="1.600"><path d="M1 7l6-6 6 6"/></svg>
    <svg class="ml-[22px]" width="22" height="18" viewBox="0 0 22 18"><path d="M6 15a5 5 0 01-1-9.500 7 7 0 0112-1A5 5 0 0117 15z" fill="#a9a9a9" stroke="#222" stroke-width="1.400"/><path d="M3 1l16 16" stroke="#222" stroke-width="1.500"/></svg>
    <svg class="ml-[18px]" width="22" height="22" viewBox="0 0 22 22" fill="none" stroke="#222" stroke-width="1.400"><path d="M1 9C3 0 15-1 20 6M20 1v5.500h-5M2 20v-5h5M2 15c2 4 5 5 8 5"/><circle cx="16" cy="16" r="5" fill="#f7950c" stroke="none"/></svg>
    <svg class="ml-[18px]" width="20" height="15" viewBox="0 0 20 15" fill="none" stroke="#222" stroke-width="1.400"><path d="M1 5.500c5-6 13-6 18 0M4 8.500c3.500-4 8.500-4 12 0M6.500 11.200c2-2.500 5-2.500 7 0"/><circle cx="10" cy="13.200" r="1.500" fill="#222" stroke="none"/></svg>
    <svg class="ml-[10px]" width="20" height="16" viewBox="0 0 20 16" fill="none" stroke="#222" stroke-width="1.300"><path d="M1 5h3l5-4v14l-5-4H1zM12.500 5l6 6M18.500 5l-6 6"/></svg>
    <svg class="ml-[10px]" width="20" height="16" viewBox="0 0 20 16"><rect x="1.500" y="4" width="15.500" height="10.500" rx="2.500" fill="none" stroke="#222" stroke-width="1.500"/><path d="M3.500 9h5l2-3v7h-7z" fill="#222"/><path d="M18 7.500v4h2v-4zM4 0L0 6h3l-1 4 5-6H4z" fill="#222"/></svg>
    <div class="ml-[22px] text-right leading-5"><p>11:24</p><p>22/03/2025</p></div>
  </div>
</div>
</body>
</html>
